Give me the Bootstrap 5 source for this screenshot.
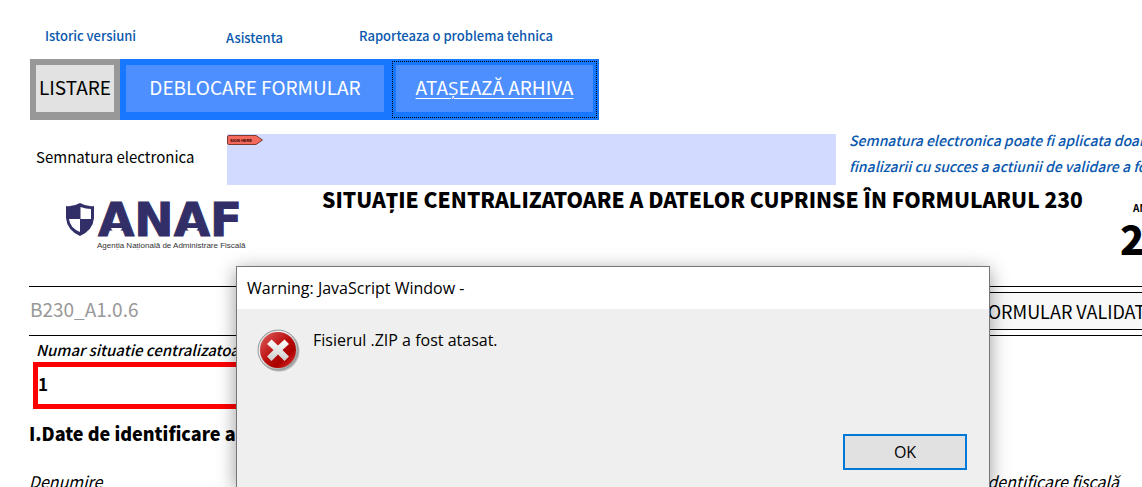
<!DOCTYPE html>
<html lang="ro">
<head>
<meta charset="utf-8">
<meta name="viewport" content="width=device-width, initial-scale=1">
<title>Formular 230</title>
<link href="https://cdn.jsdelivr.net/npm/bootstrap@5.3.0/dist/css/bootstrap.min.css" rel="stylesheet">
<style>
  body { font-family: "Noto Sans CJK SC", "Open Sans", sans-serif; font-size: 16px; line-height: 24px; color: #000; background: #fff; overflow: hidden; }
  .form-page { padding-left: 29px; height: 100vh; overflow: hidden; }
  .help-links { height: 59px; padding: 24px 0 0 16px; font-size: 13px; font-weight: 500; }
  .help-links a { color: #0a58ae; text-decoration: none; }
  .link-a { width: 181px; }
  .link-b { width: 133px; padding-top: 2px; }
  .toolbar { padding-left: 1px; }
  .tool { height: 61px; border: 6px solid #1877ff; border-bottom-width: 8px; border-radius: 0; background: #4d8fff; color: #fff; font-size: 19px; padding: 0 0 3px; }
  .tool-print { width: 90px; border-color: #989898; background: #e2e2e2; color: #000; }
  .tool-unlock { width: 270px; }
  .tool-attach { width: 209px; text-decoration: underline; text-underline-offset: 3px; text-decoration-thickness: 1px; outline: 1px dotted #000; outline-offset: -3px; }
  .sign-row { margin-top: 14px; }
  .sign-label { width: 198px; padding: 0 0 5px 7px; font-size: 15px; }
  .sign-field { width: 609px; height: 51px; background: #d2dbff; }
  .sign-note { margin-left: 13px; color: #0a58ae; font-size: 14px; font-weight: 500; font-style: italic; line-height: 26px; margin-top: -7px; }
  .brand-col { width: 293px; padding: 15px 0 0 36px; }
  .form-title { font-size: 21px; line-height: 28px; font-weight: 900; width: 798px; }
  .year-block { padding-top: 13px; }
  .year-cap { font-size: 10px; line-height: 20px; font-weight: 700; padding-left: 13px; }
  .year-num { font-size: 40px; line-height: 40px; font-weight: 900; }
  .version-row { height: 50px; border-top: 1px solid #000; border-bottom: 1px solid #000; margin-top: -1px; }
  .head-row { height: 102px; }
  .version { color: #999; font-size: 19px; padding: 0 0 4px 1px; }
  .status-box { width: 172px; height: 38px; border: 1px solid #000; border-right: 0; padding-left: 7px; background: #f8f8f8; font-size: 18px; line-height: 36px; overflow: hidden; }
  .field-label { font-style: italic; }
  .num-label { padding: 3px 0 0 7px; height: 26px; line-height: 22px; font-size: 15px; font-weight: 500; }
  .num-field { width: 320px; height: 47px; margin-left: 4px; border: 5px solid #f00; border-radius: 0; padding: 0 0 4px; font-size: 17px; font-weight: 700; color: #000; }
  .section-title { font-size: 18px; line-height: 28px; font-weight: 900; margin: 10px 0 0; }
  .ident-row { margin-top: 22px; }
  .ident-a { width: 954px; }
  .alert-window { position: absolute; left: 236px; top: 266px; width: 754px; height: 221px; border: 1px solid #777; border-bottom: 0; background: #efefef; box-shadow: 0 4px 18px rgba(0,0,0,.4); font-family: "Open Sans", sans-serif; }
  .alert-title { height: 42px; background: #fff; padding-left: 10px; }
  .alert-msg { padding-top: 3px; }
  .ok-row { padding: 59px 22px 0 0; }
  .ok-btn { width: 124px; height: 36px; border: 2px solid #0078d7; border-radius: 0; background: #e1e1e1; color: #000; padding: 0; }
</style>
<script src="https://cdn.jsdelivr.net/npm/bootstrap@5.3.0/dist/js/bootstrap.bundle.min.js"></script>
</head>
<body>
<main class="form-page text-nowrap">
  <nav class="help-links d-flex">
    <div class="link-a"><a href="#">Istoric versiuni</a></div>
    <div class="link-b"><a href="#">Asistenta</a></div>
    <div><a href="#">Raporteaza o problema tehnica</a></div>
  </nav>
  <div class="toolbar d-flex">
    <button type="button" class="btn tool tool-print">LISTARE</button>
    <button type="button" class="btn tool tool-unlock">DEBLOCARE FORMULAR</button>
    <button type="button" class="btn tool tool-attach">ATAŞEAZĂ ARHIVA</button>
  </div>
  <div class="sign-row d-flex">
    <div class="sign-label flex-shrink-0 d-flex align-items-center">Semnatura electronica</div>
    <div class="sign-field flex-shrink-0">
      <svg class="d-block" width="37" height="12" viewBox="0 0 37 12" aria-hidden="true">
        <path d="M2 1.500H29L35.500 6L29 10.500H2Q.500 10.500 .500 9V3Q.500 1.500 2 1.500Z" fill="#f4695b" stroke="#7d3c35"/>
        <text x="3" y="8" font-family="Liberation Sans" font-weight="700" font-size="4" fill="#300">SIGN HERE</text>
      </svg>
    </div>
    <div class="sign-note">Semnatura electronica poate fi aplicata doar dupa<br>finalizarii cu succes a actiunii de validare a formularului</div>
  </div>
  <header class="head-row d-flex">
    <div class="brand-col flex-shrink-0">
      <svg class="d-block" width="190" height="54" viewBox="0 0 190 54" role="img" aria-label="ANAF">
        <path d="M1 6Q8 7 15 3Q22 7 29 6V18Q28 30 15 36Q2 30 1 18Z" fill="#322f68"/>
        <path d="M15.500 7Q21 9 26 9V19H15.500ZM4 19H15V32Q5 28 4 19Z" fill="#fff"/>
        <text x="33" y="36" font-family="DejaVu Sans" font-weight="700" font-size="47" fill="#322f68" stroke="#322f68">ANAF</text>
        <path d="M46 28H57Q56 32 51.500 32Q47 32 46 28Z" fill="#fff"/>
        <path d="M122 28H133Q132 32 127.500 32Q123 32 122 28Z" fill="#fff"/>
        <text x="32" y="48" font-family="Liberation Sans" font-size="8" fill="#333">Agenția Națională de Administrare Fiscală</text>
      </svg>
    </div>
    <h1 class="form-title flex-shrink-0 mb-0">SITUAŢIE CENTRALIZATOARE A DATELOR CUPRINSE ÎN FORMULARUL 230</h1>
    <div class="year-block">
      <div class="year-cap">ANUL</div>
      <div class="year-num">2</div>
    </div>
  </header>
  <div class="version-row d-flex align-items-center justify-content-between">
    <span class="version">B230_A1.0.6</span>
    <output class="status-box flex-shrink-0">FORMULAR VALIDAT</output>
  </div>
  <label class="field-label num-label d-block" for="nr">Numar situatie centralizatoare</label>
  <input id="nr" class="form-control num-field" value="1">
  <h2 class="section-title">I.Date de identificare a</h2>
  <div class="ident-row field-label d-flex">
    <span class="ident-a">Denumire</span>
    <span>identificare fiscală</span>
  </div>
</main>
<section class="alert-window" role="alertdialog" aria-labelledby="wt" aria-describedby="wm">
  <div id="wt" class="alert-title d-flex align-items-center">Warning: JavaScript Window -</div>
  <div class="d-flex pt-3 ps-3">
    <svg class="flex-shrink-0 mt-1 ms-1" width="44" height="46" viewBox="0 0 44 46" aria-hidden="true">
      <defs>
        <linearGradient id="rim" x1="0" y1="0" x2="1" y2="1"><stop offset="0" stop-color="#aaa"/><stop offset=".3" stop-color="#f4f4f4"/><stop offset="1" stop-color="#888"/></linearGradient>
        <linearGradient id="red" x1="0" y1="0" x2="1" y2="1"><stop offset="0" stop-color="#e36060"/><stop offset=".5" stop-color="#b80c0c"/><stop offset=".7" stop-color="#a00"/><stop offset="1" stop-color="#e33"/></linearGradient>
        <linearGradient id="cross" x1="0" y1="0" x2="0" y2="1"><stop offset="0" stop-color="#fff"/><stop offset="1" stop-color="#ccc"/></linearGradient>
      </defs>
      <circle cx="22" cy="22" r="20.500" fill="#bbb"/>
      <circle cx="21" cy="21" r="20" fill="url(#rim)" stroke="#999"/>
      <circle cx="21" cy="21" r="18" fill="url(#red)"/>
      <path d="M14.500 10.500L21 16.500L27.500 10.500L32 15L25.500 21L32 27.500L27.500 32L21 25.500L14.500 32L10 27.500L16.500 21L10 15Z" fill="url(#cross)"/>
    </svg>
    <p id="wm" class="alert-msg mb-0 ms-2 ps-1">Fisierul .ZIP a fost atasat.</p>
  </div>
  <div class="ok-row d-flex justify-content-end">
    <button type="button" class="btn ok-btn">OK</button>
  </div>
</section>
</body>
</html>
